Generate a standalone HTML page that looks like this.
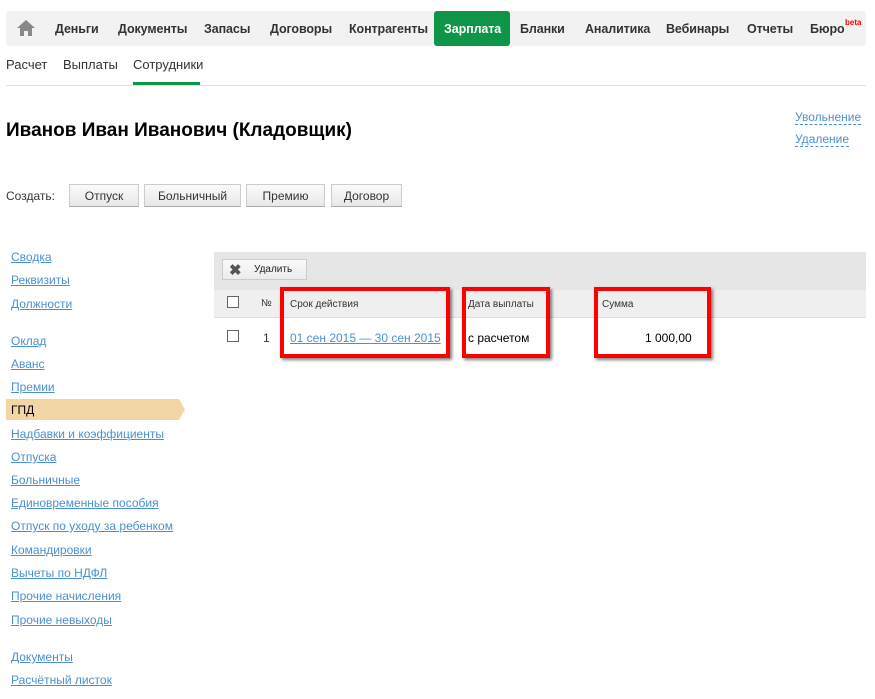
<!DOCTYPE html>
<html><head><meta charset="utf-8"><style>
body{margin:0;width:875px;height:699px;background:#fff;font-family:"Liberation Sans",Arial,sans-serif;position:relative;overflow:hidden;color:#333}
.a{position:absolute;white-space:nowrap}
.nav{left:6px;top:11px;width:860px;height:35px;background:#f2f2f2;border-radius:3px}
.ni{top:22px;font-size:12.5px;font-weight:bold;color:#333;letter-spacing:-0.1px}
.lk{color:#4a90d0;text-decoration:underline;font-size:12px}
.btn{top:184px;height:23px;background:linear-gradient(#fafafa,#e8e8e8);border:1px solid #ccc;border-bottom-color:#aaa;font-size:12px;color:#333;text-align:center;line-height:23px;box-sizing:border-box}
.rb{border:4px solid #f00;box-shadow:2px 2px 3px rgba(0,0,0,.5);top:287px;height:71px;box-sizing:border-box}
.cb{width:10px;height:10px;border:1px solid #666;background:#fff}
</style></head><body>
<div class="a nav"></div>
<svg class="a" style="left:16px;top:19px" width="20" height="18" viewBox="0 0 20 18"><path d="M10 1 L1 9 H4 V17 H8 V12 H12 V17 H16 V9 H19 Z" fill="#888"/></svg>
<div class="a ni" style="left:55px">Деньги</div>
<div class="a ni" style="left:118px">Документы</div>
<div class="a ni" style="left:204px">Запасы</div>
<div class="a ni" style="left:270px">Договоры</div>
<div class="a ni" style="left:349px">Контрагенты</div>
<div class="a" style="left:434px;top:11px;width:76px;height:35px;background:#0e9547;border-radius:3px"></div>
<div class="a ni" style="left:444px;color:#fff">Зарплата</div>
<div class="a ni" style="left:520px">Бланки</div>
<div class="a ni" style="left:585px">Аналитика</div>
<div class="a ni" style="left:666px">Вебинары</div>
<div class="a ni" style="left:747px">Отчеты</div>
<div class="a ni" style="left:810px">Бюро</div>
<div class="a" style="left:845px;top:18px;font-size:8px;color:#f00;font-weight:bold">beta</div>

<div class="a" style="left:6px;top:57px;font-size:13px">Расчет</div>
<div class="a" style="left:63px;top:57px;font-size:13px">Выплаты</div>
<div class="a" style="left:133px;top:57px;font-size:13px">Сотрудники</div>
<div class="a" style="left:133px;top:82px;width:67px;height:3px;background:#0e9547"></div>
<div class="a" style="left:6px;top:85px;width:860px;height:1px;background:#e0e0e0"></div>

<div class="a" style="left:6px;top:120px;font-size:19px;font-weight:bold;color:#000">Иванов Иван Иванович (Кладовщик)</div>
<div class="a" style="left:795px;top:110px;font-size:12px;color:#4a90d0;border-bottom:1px dashed #4a90d0">Увольнение</div>
<div class="a" style="left:795px;top:132px;font-size:12px;color:#4a90d0;border-bottom:1px dashed #4a90d0">Удаление</div>

<div class="a" style="left:6px;top:189px;font-size:12px">Создать:</div>
<div class="a btn" style="left:69px;width:70px">Отпуск</div>
<div class="a btn" style="left:144px;width:97px">Больничный</div>
<div class="a btn" style="left:246px;width:79px">Премию</div>
<div class="a btn" style="left:331px;width:71px">Договор</div>

<div class="a lk" style="left:11px;top:250px">Сводка</div>
<div class="a lk" style="left:11px;top:273px">Реквизиты</div>
<div class="a lk" style="left:11px;top:297px">Должности</div>
<div class="a lk" style="left:11px;top:334px">Оклад</div>
<div class="a lk" style="left:11px;top:357px">Аванс</div>
<div class="a lk" style="left:11px;top:380px">Премии</div>
<svg class="a" style="left:6px;top:399px" width="180" height="21"><path d="M0 0H173L179 10.5L173 21H0Z" fill="#f2d6a6"/></svg>
<div class="a" style="left:11px;top:403px;font-size:12px;color:#000">ГПД</div>
<div class="a lk" style="left:11px;top:427px">Надбавки и коэффициенты</div>
<div class="a lk" style="left:11px;top:450px">Отпуска</div>
<div class="a lk" style="left:11px;top:473px">Больничные</div>
<div class="a lk" style="left:11px;top:496px">Единовременные пособия</div>
<div class="a lk" style="left:11px;top:519px">Отпуск по уходу за ребенком</div>
<div class="a lk" style="left:11px;top:543px">Командировки</div>
<div class="a lk" style="left:11px;top:566px">Вычеты по НДФЛ</div>
<div class="a lk" style="left:11px;top:589px">Прочие начисления</div>
<div class="a lk" style="left:11px;top:613px">Прочие невыходы</div>
<div class="a lk" style="left:11px;top:650px">Документы</div>
<div class="a lk" style="left:11px;top:673px">Расчётный листок</div>

<div class="a" style="left:214px;top:252px;width:652px;height:38px;background:#e6e6e6"></div>
<div class="a" style="left:222px;top:259px;width:85px;height:21px;background:linear-gradient(#fafafa,#ececec);border:1px solid #ccc;box-sizing:border-box"></div>
<div class="a" style="left:229px;top:261px;font-size:15px;font-weight:bold;color:#555">✖</div>
<div class="a" style="left:254px;top:264px;font-size:10px;color:#222">Удалить</div>
<div class="a" style="left:214px;top:290px;width:652px;height:27px;background:#efefef;border-bottom:1px solid #ddd"></div>
<div class="a cb" style="left:227px;top:296px"></div>
<div class="a" style="left:261px;top:298px;font-size:10px">№</div>
<div class="a" style="left:290px;top:299px;font-size:10px">Срок действия</div>
<div class="a" style="left:468px;top:299px;font-size:10px">Дата выплаты</div>
<div class="a" style="left:602px;top:299px;font-size:10px">Сумма</div>
<div class="a cb" style="left:227px;top:330px"></div>
<div class="a" style="left:263px;top:331px;font-size:12px">1</div>
<div class="a lk" style="left:290px;top:331px">01 сен 2015 — 30 сен 2015</div>
<div class="a" style="left:468px;top:331px;font-size:12px;color:#000">с расчетом</div>
<div class="a" style="left:645px;top:331px;font-size:12px;color:#000">1 000,00</div>
<div class="a rb" style="left:280px;width:170px"></div>
<div class="a rb" style="left:462px;width:88px"></div>
<div class="a rb" style="left:594px;width:117px"></div>
</body></html>
